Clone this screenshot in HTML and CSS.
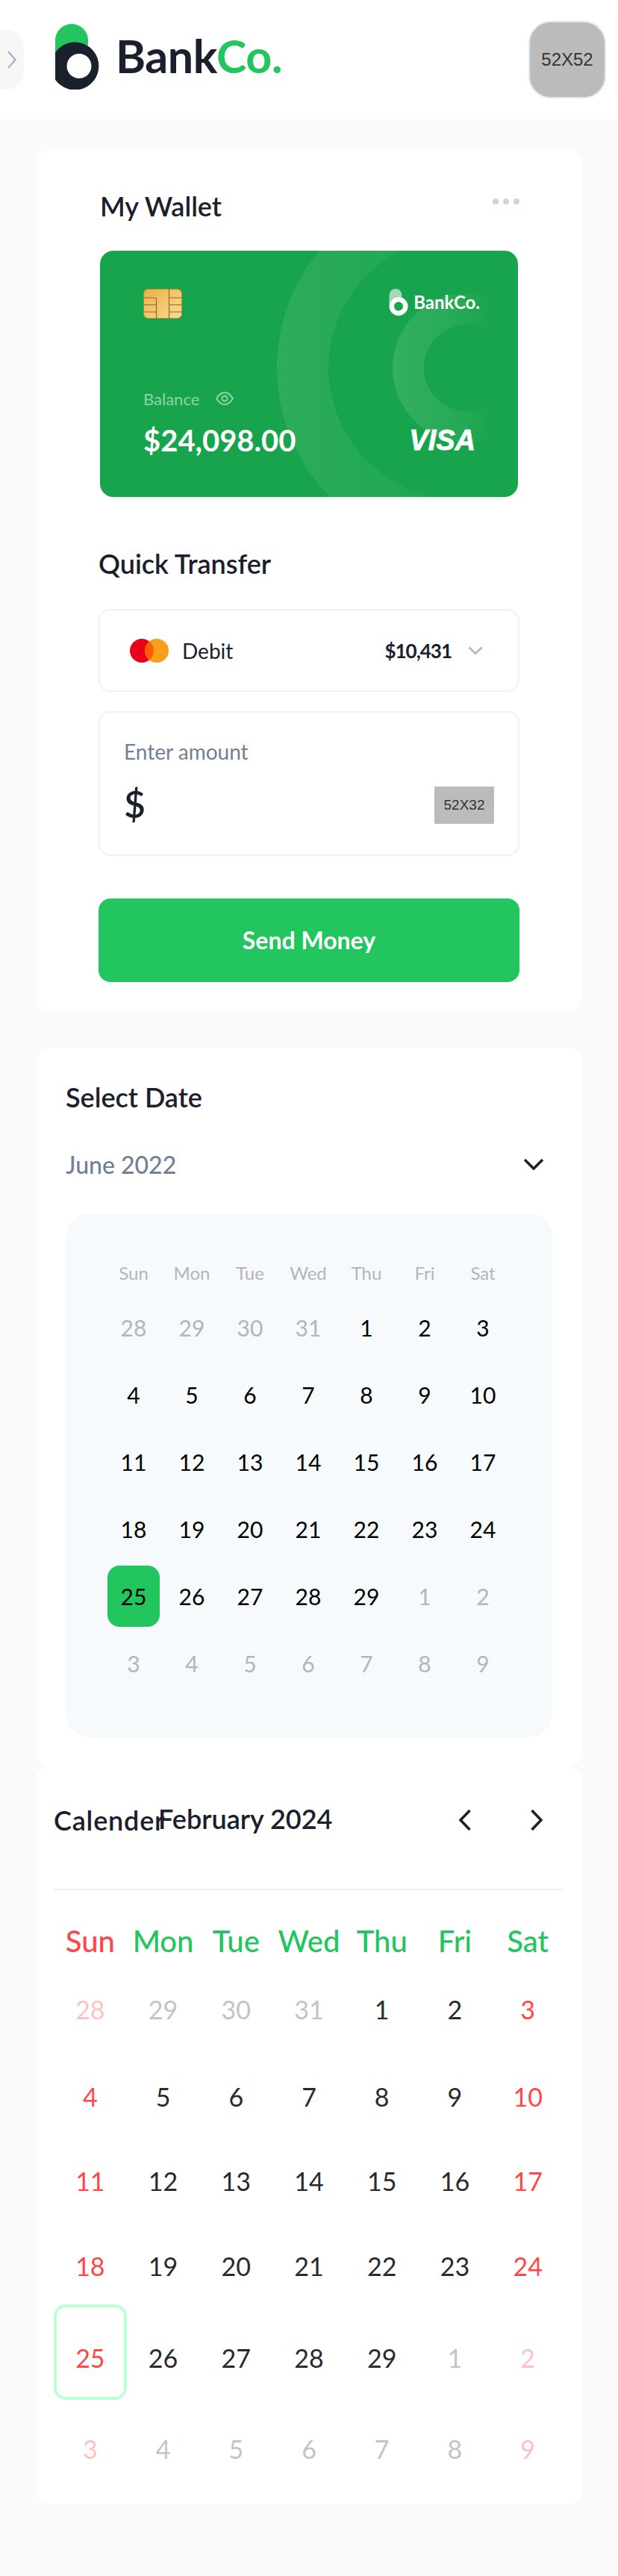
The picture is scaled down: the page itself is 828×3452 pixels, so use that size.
FILE: index.html
```html
<!DOCTYPE html>
<html lang="en">
<head>
  <meta charset="UTF-8">
  <meta name="viewport" content="width=device-width, initial-scale=1.0">
  <title>BankCo. Wallet</title>
  <link rel="stylesheet" href="styles.css">
</head>
<body>

  <header class="topbar">
    <div class="topbar-left">
      <button class="side-toggle" aria-label="Open menu">
        <svg width="12" height="24" viewBox="0 0 12 24" fill="none"><path d="M1 1l9.500 11L1 23" stroke="#a9b6ca" stroke-width="2.500"/></svg>
      </button>
      <div class="brand">
        <svg class="brand-mark" width="64" height="88" viewBox="0 0 64 88">
          <path d="M0 52V22a22 22 0 0 1 44 0v7A32 32 0 0 0 0 52z" fill="#22c55e"/>
          <path fill-rule="evenodd" d="M32 25a32 32 0 1 0 0 63 32 32 0 0 0 0-63zm0 15a16.500 16.500 0 1 1 0 33 16.500 16.500 0 0 1 0-33z" fill="#1a202c"/>
        </svg>
        <span class="brand-name">Bank<em>Co.</em></span>
      </div>
    </div>
    <div class="avatar">52X52</div>
  </header>

  <main class="content">

    <section class="panel wallet-panel">
      <div class="panel-head">
        <h2>My Wallet</h2>
        <div class="dots"><i></i><i></i><i></i></div>
      </div>

      <div class="bank-card">
        <svg class="card-rings" viewBox="0 0 560 330">
          <defs>
            <linearGradient id="ringFade" x1="0" y1="0" x2="1" y2="0">
              <stop offset="0" stop-color="#fff" stop-opacity="0.09"/>
              <stop offset="0.3" stop-color="#fff" stop-opacity="0.05"/>
              <stop offset="0.55" stop-color="#fff" stop-opacity="0"/>
            </linearGradient>
            <linearGradient id="ringFadeSmall" x1="0" y1="0" x2="1" y2="0">
              <stop offset="0" stop-color="#fff" stop-opacity="0.12"/>
              <stop offset="0.4" stop-color="#fff" stop-opacity="0.07"/>
              <stop offset="0.68" stop-color="#fff" stop-opacity="0"/>
            </linearGradient>
          </defs>
          <path fill-rule="evenodd" fill="url(#ringFade)" d="M482 -88a245 245 0 1 0 0 490 245 245 0 0 0 0-490zm0 69a176 176 0 1 1 0 352 176 176 0 0 1 0-352z"/>
          <path fill-rule="evenodd" fill="url(#ringFadeSmall)" d="M492 57a100 100 0 1 0 0 200 100 100 0 0 0 0-200zm0 42a58 58 0 1 1 0 116 58 58 0 0 1 0-116z"/>
        </svg>

        <div class="card-top">
          <svg width="52" height="40" viewBox="0 0 52 40">
            <defs>
              <linearGradient id="chipGold" x1="0" y1="0" x2="1" y2="1">
                <stop offset="0" stop-color="#ebb04a"/>
                <stop offset="1" stop-color="#fedb8e"/>
              </linearGradient>
            </defs>
            <rect x="0.500" y="0.500" width="51" height="39" rx="6" fill="url(#chipGold)" stroke="#b58d42"/>
            <path d="M34.500 0v40M34.500 12H52M34.500 21.500H52M34.500 31H52M0 12h14q3.500 0 3.500 3.500V40M0 21.500h17.500M0 31h17.500" fill="none" stroke="#8a6c35" stroke-width="1.200"/>
          </svg>
          <div class="card-brand">
            <svg width="26" height="36" viewBox="0 0 26 36">
              <path d="M0.500 22V8.500a8.500 8.500 0 0 1 17 0V12A12.500 12.500 0 0 0 0.500 22z" fill="#fff" fill-opacity="0.6"/>
              <path fill-rule="evenodd" d="M13 11a12.500 12.500 0 1 0 0 25 12.500 12.500 0 0 0 0-25zm0 6.500a6 6 0 1 1 0 12 6 6 0 0 1 0-12z" fill="#fff"/>
            </svg>
            <span>BankCo.</span>
          </div>
        </div>

        <div class="card-bottom">
          <div class="balance-label">
            <span>Balance</span>
            <svg width="24" height="18" viewBox="0 0 24 18" fill="none" stroke="#8fd3a8" stroke-width="2"><path d="M1 9c3-5 7-8 11-8s8 3 11 8c-3 5-7 8-11 8S4 14 1 9z"/><circle cx="12" cy="9" r="3.500"/></svg>
          </div>
          <div class="balance-row">
            <span class="balance">$24,098.00</span>
            <span class="visa">VISA</span>
          </div>
        </div>
      </div>

      <h2 class="transfer-title">Quick Transfer</h2>

      <div class="field select-field">
        <svg width="52" height="32" viewBox="0 0 52 32">
          <circle cx="16" cy="16" r="16" fill="#eb001b"/>
          <circle cx="36" cy="16" r="16" fill="#f79e1b"/>
          <path d="M26 3.500a16 16 0 0 1 0 25 16 16 0 0 1 0-25z" fill="#ff5f00"/>
        </svg>
        <span class="select-name">Debit</span>
        <span class="select-amount">$10,431</span>
        <svg width="20" height="12" viewBox="0 0 20 12" fill="none"><path d="M1.500 1.500l8.500 8.500 8.500-8.500" stroke="#a9b6ca" stroke-width="2.500"/></svg>
      </div>

      <div class="field amount-field">
        <label>Enter amount</label>
        <div class="amount-row">
          <span class="dollar">$</span>
          <div class="currency-thumb">52X32</div>
        </div>
      </div>

      <button class="send-btn">Send Money</button>
    </section>

    <section class="panel date-panel">
      <h2>Select Date</h2>
      <div class="month-select">
        <span>June 2022</span>
        <svg width="28" height="16" viewBox="0 0 28 16" fill="none"><path d="M2 2l12 12L26 2" stroke="#1a202c" stroke-width="3.500"/></svg>
      </div>
      <div class="mini-cal">
        <div class="mini-grid">
          <span class="mini-week">Sun</span><span class="mini-week">Mon</span><span class="mini-week">Tue</span><span class="mini-week">Wed</span><span class="mini-week">Thu</span><span class="mini-week">Fri</span><span class="mini-week">Sat</span>
          <span class="mini-day off">28</span><span class="mini-day off">29</span><span class="mini-day off">30</span><span class="mini-day off">31</span><span class="mini-day">1</span><span class="mini-day">2</span><span class="mini-day">3</span>
          <span class="mini-day">4</span><span class="mini-day">5</span><span class="mini-day">6</span><span class="mini-day">7</span><span class="mini-day">8</span><span class="mini-day">9</span><span class="mini-day">10</span>
          <span class="mini-day">11</span><span class="mini-day">12</span><span class="mini-day">13</span><span class="mini-day">14</span><span class="mini-day">15</span><span class="mini-day">16</span><span class="mini-day">17</span>
          <span class="mini-day">18</span><span class="mini-day">19</span><span class="mini-day">20</span><span class="mini-day">21</span><span class="mini-day">22</span><span class="mini-day">23</span><span class="mini-day">24</span>
          <span class="mini-day active">25</span><span class="mini-day">26</span><span class="mini-day">27</span><span class="mini-day">28</span><span class="mini-day">29</span><span class="mini-day off">1</span><span class="mini-day off">2</span>
          <span class="mini-day off">3</span><span class="mini-day off">4</span><span class="mini-day off">5</span><span class="mini-day off">6</span><span class="mini-day off">7</span><span class="mini-day off">8</span><span class="mini-day off">9</span>
        </div>
      </div>
    </section>

    <section class="panel calendar-panel">
      <div class="cal-head">
        <h2 class="cal-title">Calender</h2>
        <h2 class="cal-month">February 2024</h2>
        <div class="cal-nav">
          <svg width="18" height="30" viewBox="0 0 18 30" fill="none"><path d="M15.500 2L3 15l12.500 13" stroke="#1a202c" stroke-width="3.500"/></svg>
          <svg width="18" height="30" viewBox="0 0 18 30" fill="none"><path d="M2.500 2L15 15 2.500 28" stroke="#1a202c" stroke-width="3.500"/></svg>
        </div>
      </div>
      <div class="cal-week">
        <span class="red">Sun</span><span>Mon</span><span>Tue</span><span>Wed</span><span>Thu</span><span>Fri</span><span>Sat</span>
      </div>
      <div class="cal-grid">
        <span class="pink">28</span><span class="gray">29</span><span class="gray">30</span><span class="gray">31</span><span>1</span><span>2</span><span class="red">3</span>
        <span class="red">4</span><span>5</span><span>6</span><span>7</span><span>8</span><span>9</span><span class="red">10</span>
        <span class="red">11</span><span>12</span><span>13</span><span>14</span><span>15</span><span>16</span><span class="red">17</span>
        <span class="red">18</span><span>19</span><span>20</span><span>21</span><span>22</span><span>23</span><span class="red">24</span>
        <span class="red today">25</span><span>26</span><span>27</span><span>28</span><span>29</span><span class="gray">1</span><span class="pink">2</span>
        <span class="pink">3</span><span class="gray">4</span><span class="gray">5</span><span class="gray">6</span><span class="gray">7</span><span class="gray">8</span><span class="pink">9</span>
      </div>
    </section>

  </main>

</body>
</html>
```

FILE: styles.css
```css
* {
  box-sizing: border-box;
}
body {
  margin: 0;
  background: #fafafa;
  font-family: 'Lato', 'Liberation Sans', sans-serif;
  color: #1a202c;
}
h2 {
  margin: 0;
  font-size: 36px;
  line-height: 44px;
  font-weight: 600;
}

/* top bar */
.topbar {
  height: 160px;
  background: #fff;
  display: flex;
  align-items: center;
  justify-content: space-between;
  padding-right: 16px;
}
.topbar-left {
  display: flex;
  align-items: center;
}
.side-toggle {
  width: 32px;
  height: 80px;
  padding: 0 0 0 10px;
  border: none;
  background: #f7f7f7;
  border-radius: 0 24px 24px 0;
  display: flex;
  align-items: center;
}
.brand {
  display: flex;
  align-items: flex-end;
  margin: 0 0 8px 42px;
}
.brand-name {
  font-size: 61px;
  line-height: 62px;
  font-weight: 700;
  margin: 0 0 14px 17px;
  letter-spacing: -0.4px;
}
.brand-name em {
  font-style: normal;
  color: #22c55e;
}
.avatar {
  width: 104px;
  height: 104px;
  background: #bbb;
  border: 2px solid #e2e8f0;
  border-radius: 30px;
  display: flex;
  align-items: center;
  justify-content: center;
  font-family: 'Liberation Sans', sans-serif;
  font-size: 24px;
  color: #333;
}

/* panels */
.content {
  display: flex;
  flex-direction: column;
  padding: 40px 48px 96px;
}
.panel {
  background: #fff;
  border-radius: 20px;
}
.wallet-panel {
  padding: 54px 84px 39px;
}
.panel-head {
  display: flex;
  justify-content: space-between;
  padding: 0 0 38px 2px;
}
.dots {
  display: flex;
  gap: 6px;
  margin-top: 12px;
}
.dots i {
  width: 8px;
  height: 8px;
  border-radius: 50%;
  background: #cbd5e1;
}

/* green card */
.bank-card {
  position: relative;
  overflow: hidden;
  height: 330px;
  margin: 0 2px;
  padding: 51px 51px 52px 58px;
  background: #18a44c;
  border-radius: 18px;
  color: #fff;
  display: flex;
  flex-direction: column;
  justify-content: space-between;
}
.card-rings {
  position: absolute;
  left: 0;
  top: 0;
  width: 560px;
  height: 330px;
}
.card-top {
  position: relative;
  display: flex;
  justify-content: space-between;
  align-items: flex-start;
}
.card-brand {
  display: flex;
  align-items: flex-end;
  gap: 7px;
}
.card-brand span {
  font-size: 24px;
  line-height: 24px;
  font-weight: 700;
  margin-bottom: 6px;
}
.card-bottom {
  position: relative;
}
.balance-label {
  display: flex;
  align-items: center;
  gap: 22px;
  height: 24px;
  font-size: 22px;
  color: #8fd3a8;
}
.balance-row {
  display: flex;
  justify-content: space-between;
  align-items: center;
  margin-top: 20px;
  height: 48px;
}
.balance {
  font-size: 40px;
  font-weight: 700;
}
.visa {
  font-family: 'Liberation Sans', sans-serif;
  font-size: 38px;
  font-weight: 700;
  font-style: italic;
  -webkit-text-stroke: 0.8px #fff;
  margin-right: 6px;
}

/* quick transfer */
.transfer-title {
  margin: 67px 0 39px;
}
.field {
  background: #fff;
  border: 2px solid #edf2f7;
  border-radius: 16px;
}
.select-field {
  height: 111px;
  display: flex;
  align-items: center;
  padding: 0 47px 0 40px;
}
.select-name {
  font-size: 28px;
  margin-left: 18px;
}
.select-amount {
  font-size: 26px;
  letter-spacing: -1px;
  font-weight: 700;
  margin: 0 22px 0 auto;
}
.amount-field {
  height: 194px;
  margin-top: 26px;
  padding: 34px 32px 0;
}
.amount-field label {
  display: block;
  font-size: 28px;
  line-height: 36px;
  color: #718096;
}
.amount-row {
  display: flex;
  justify-content: space-between;
  align-items: center;
  margin-top: 29px;
}
.dollar {
  font-size: 50px;
  line-height: 46px;
  margin-bottom: 4px;
  font-weight: 600;
}
.currency-thumb {
  width: 80px;
  height: 50px;
  background: #bbb;
  display: flex;
  align-items: center;
  justify-content: center;
  font-family: 'Liberation Sans', sans-serif;
  font-size: 19px;
  color: #333;
}
.send-btn {
  display: block;
  width: 100%;
  height: 112px;
  margin-top: 57px;
  padding-bottom: 3px;
  border: none;
  border-radius: 16px;
  background: #22c55e;
  color: #fff;
  font-family: inherit;
  font-size: 32px;
  font-weight: 700;
}

/* select date */
.date-panel {
  margin-top: 49px;
  padding: 44px 40px 39px;
}
.month-select {
  display: flex;
  justify-content: space-between;
  align-items: center;
  height: 40px;
  margin-top: 48px;
  padding-right: 11px;
  font-size: 32px;
  font-weight: 500;
  color: #718096;
}
.mini-cal {
  margin-top: 46px;
  padding: 56px 56px 58px;
  background: #f7fafd;
  border-radius: 32px;
}
.mini-grid {
  display: grid;
  grid-template-columns: repeat(7, 70px);
  grid-template-rows: 48px repeat(6, 82px);
  gap: 8px;
}
.mini-week {
  font-size: 24px;
  line-height: 48px;
  text-align: center;
  color: #b5b5b5;
}
.mini-day {
  font-size: 30px;
  line-height: 82px;
  text-align: center;
  color: #000;
  border-radius: 16px;
}
.mini-day.off {
  color: #b5b5b5;
}
.mini-day.active {
  background: #22c55e;
}

/* big calendar */
.calendar-panel {
  padding: 50px 24px 54px;
}
.cal-head {
  display: flex;
  align-items: flex-start;
  height: 116px;
  border-bottom: 2px solid #e8f2fc;
}
.cal-title {
  width: 140px;
  white-space: nowrap;
  letter-spacing: 0.8px;
}
.cal-month {
  line-height: 40px;
}
.cal-nav {
  display: flex;
  gap: 78px;
  margin: 7px 28px 0 auto;
}
.cal-week,
.cal-grid {
  display: grid;
  grid-template-columns: repeat(7, 1fr);
  text-align: center;
}
.cal-week {
  margin: 44px 0 48px;
  font-size: 40px;
  line-height: 48px;
  font-weight: 500;
  color: #22c55e;
}
.cal-grid {
  grid-template-rows: 117px 113px 114px 123px 122px 40px;
  font-size: 34px;
  line-height: 40px;
  color: #2a2a2e;
}
.cal-grid .gray {
  color: #c4c4c4;
}
.cal-week .red,
.cal-grid .red {
  color: #ff4747;
}
.cal-grid .pink {
  color: #ffc2c2;
}
.today {
  position: relative;
}
.today::before {
  content: "";
  position: absolute;
  top: -52px;
  bottom: 46px;
  left: 0;
  right: 0;
  border: 4px solid #bbffd4;
  border-radius: 16px;
}
```
